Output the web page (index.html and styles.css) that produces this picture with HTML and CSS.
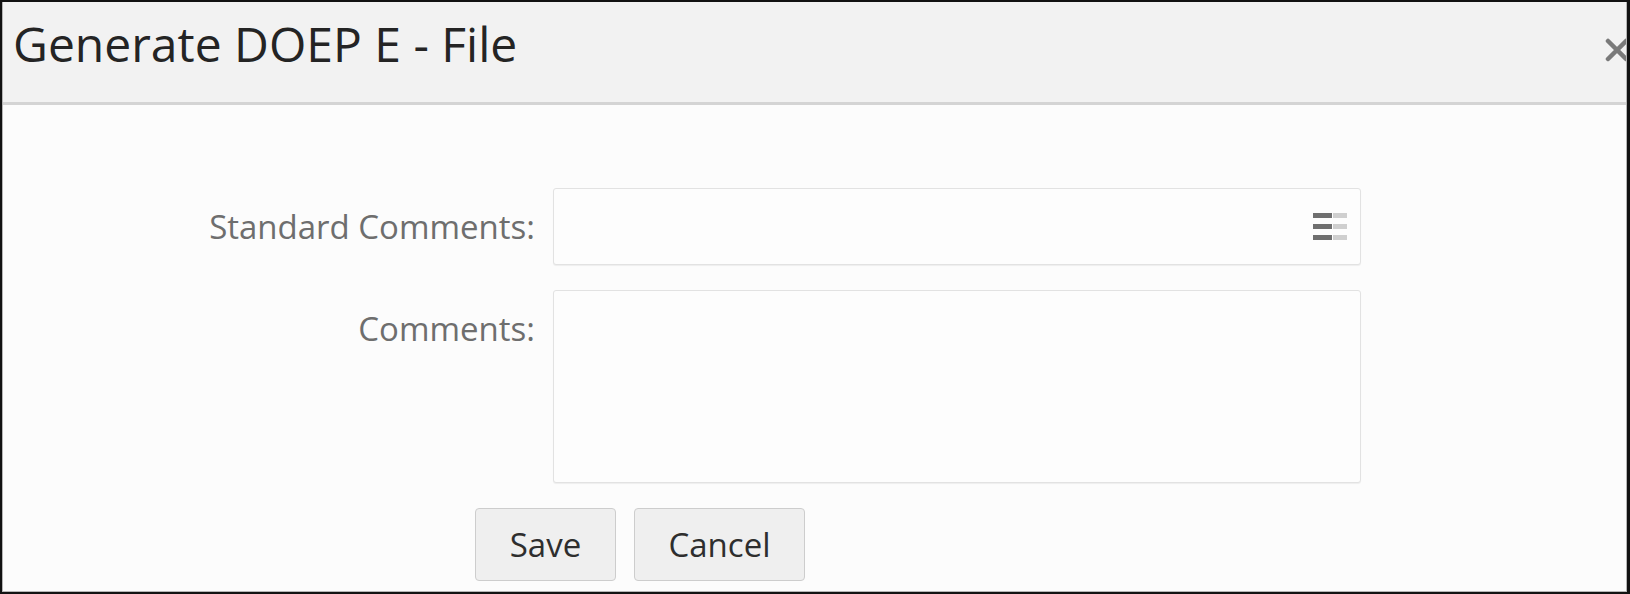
FILE: index.html
```html
<!DOCTYPE html>
<html>
<head>
    <title>Generate DOEP E - File</title>
<link rel="stylesheet" href="styles.css">
</head>
<body>
    <div class="frame">
        <div class="dialog">
            <div class="dialog-header">
                <h1 class="dialog-title">Generate DOEP E - File</h1>
                <button type="button" class="close-btn" title="Close">
                    <svg width="24" height="24" viewBox="0 0 24 24">
                        <path d="M3 3 L21 21 M21 3 L3 21" stroke="#7a7a7a" stroke-width="4.5" stroke-linecap="round"/>
                    </svg>
                </button>
            </div>
            <div class="dialog-body">
                <form id="doepForm" class="form">
                    <div class="form-row row-center">
                        <label class="form-label" for="std_comments">Standard Comments:</label>
                        <div class="field select-field" id="std_comments">
                            <svg class="list-icon" width="34" height="27" viewBox="0 0 34 27">
                                <rect x="0" y="0" width="19" height="5" fill="#6f6f6f"/>
                                <rect x="20" y="0" width="14" height="5" fill="#cfcfcf"/>
                                <rect x="0" y="11" width="19" height="5" fill="#6f6f6f"/>
                                <rect x="20" y="11" width="14" height="5" fill="#cfcfcf"/>
                                <rect x="0" y="22" width="19" height="5" fill="#6f6f6f"/>
                                <rect x="20" y="22" width="14" height="5" fill="#cfcfcf"/>
                            </svg>
                        </div>
                    </div>
                    <div class="form-row">
                        <label class="form-label label-top" for="comments">Comments:</label>
                        <textarea class="field textarea-field" id="comments"></textarea>
                    </div>
                    <div class="form-actions">
                        <button type="button" class="btn btn-save">Save</button>
                        <button type="button" class="btn btn-cancel">Cancel</button>
                    </div>
                </form>
            </div>
        </div>
    </div>
</body>
</html>
```
FILE: styles.css
```css
html, body {
  margin: 0;
  padding: 0;
}

body {
  font-family: "Open Sans", "Noto Sans", sans-serif;
  background-color: #111111;
}

.frame {
  width: 1630px;
  height: 594px;
  box-sizing: border-box;
  border-style: solid;
  border-color: #121212;
  border-width: 2px 3px 2px 2px;
}

.dialog {
  height: 100%;
  box-sizing: border-box;
  border: 1px solid #b5b5b5;
  border-top: none;
  background-color: #fcfcfc;
  overflow: hidden;
}

.dialog-header {
  display: flex;
  align-items: center;
  height: 100px;
  padding-left: 10px;
  background-color: #f2f2f2;
  border-bottom: 3px solid #d4d4d4;
}

.dialog-title {
  margin: 0;
  font-size: 48px;
  font-weight: normal;
  color: #242424;
  padding-bottom: 18px;
}

.close-btn {
  margin-left: auto;
  margin-right: -3px;
  margin-top: -4px;
  padding: 0;
  border: none;
  background: none;
  width: 24px;
  height: 24px;
  cursor: pointer;
}

.dialog-body {
  padding-top: 83px;
}

.form {
  display: flex;
  flex-direction: column;
  gap: 25px;
}

.form-row {
  display: grid;
  grid-template-columns: 532px 808px;
  column-gap: 18px;
}

.row-center {
  align-items: center;
}

.form-label {
  font-size: 33px;
  color: #6e6e6e;
  text-align: right;
}

.label-top {
  padding-top: 16px;
}

.field {
  box-sizing: border-box;
  border: 1px solid #e2e2e2;
  border-radius: 3px;
  background-color: #fdfdfd;
  box-shadow: 0 1px 1px rgba(0, 0, 0, 0.06);
}

.select-field {
  height: 77px;
  display: flex;
  align-items: center;
  justify-content: flex-end;
  padding-right: 13px;
}

.list-icon {
  filter: blur(0.4px);
}

.textarea-field {
  height: 193px;
  resize: none;
  font-family: inherit;
  font-size: 33px;
  margin: 0;
}

.form-actions {
  display: flex;
  gap: 18px;
  margin-left: 472px;
}

.btn {
  height: 73px;
  box-sizing: border-box;
  font-family: inherit;
  font-size: 33px;
  color: #2e2e2e;
  background-color: #efefef;
  border: 1px solid #cdcdcd;
  border-radius: 4px;
  cursor: pointer;
  padding: 0;
}

.btn-save {
  width: 141px;
}

.btn-cancel {
  width: 171px;
}

.btn:hover {
  background-color: #e4e4e4;
}
```
